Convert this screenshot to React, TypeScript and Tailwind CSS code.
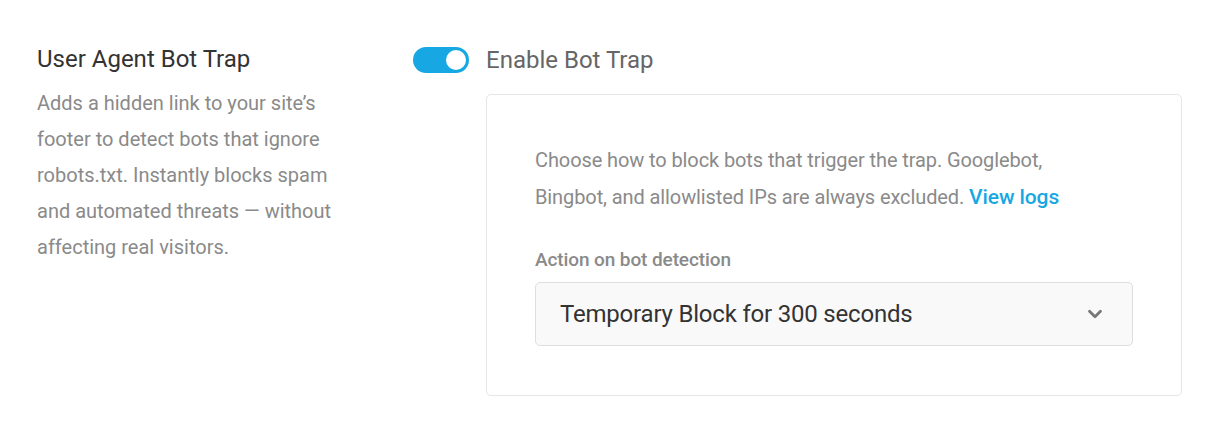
import { ChevronDown } from "lucide-react"

export default function App() {
  return (
    <div className="w-[1220px] h-[430px] bg-white font-['Roboto',sans-serif]">
      <div className="flex pt-[43px] pl-[37px]">
        {/* Left: section title */}
        <div className="w-[310px] shrink-0">
          <h3 className="text-[24px] leading-[32px] font-normal text-[#333]">User Agent Bot Trap</h3>
          <p className="mt-[10px] w-[308px] text-[20px] leading-[36px] text-[#8a8a8a]">
            Adds a hidden link to your site’s footer to detect bots that ignore robots.txt. Instantly blocks spam
            and automated threats — without affecting real visitors.
          </p>
        </div>

        {/* Right: setting */}
        <div className="ml-[66px] w-[769px]">
          <div className="flex items-center gap-[17px] h-[34px]">
            <button className="relative w-[56px] h-[26px] rounded-full bg-[#17a8e3]">
              <span className="absolute right-[3px] top-[3px] w-[20px] h-[20px] rounded-full bg-white" />
            </button>
            <span className="text-[24px] text-[#666]">Enable Bot Trap</span>
          </div>

          <div className="ml-[73px] mt-[17px] w-[696px] border border-[#e6e6e6] rounded-[5px] px-[48px] pt-[47px] pb-[49px]">
            <p className="text-[20px] leading-[37px] text-[#8a8a8a] tracking-[-0.1px]">
              Choose how to block bots that trigger the trap. Googlebot,
              <br />
              Bingbot, and allowlisted IPs are always excluded.{" "}
              <a className="text-[#17a8e3] font-medium text-[21px]">View logs</a>
            </p>

            <label className="block mt-[33px] text-[19px] leading-[22px] font-medium text-[#8a8a8a] tracking-[-0.1px]">
              Action on bot detection
            </label>
            <div className="mt-[11px] w-[598px] h-[64px] flex items-center justify-between pl-[24px] pr-[26px] bg-[#f9f9f9] border border-[#dedede] rounded-[5px]">
              <span className="text-[24px] text-[#333] tracking-[-0.2px]">Temporary Block for 300 seconds</span>
              <ChevronDown className="w-[22px] h-[22px] text-[#777]" strokeWidth={3} />
            </div>
          </div>
        </div>
      </div>
    </div>
  )
}
